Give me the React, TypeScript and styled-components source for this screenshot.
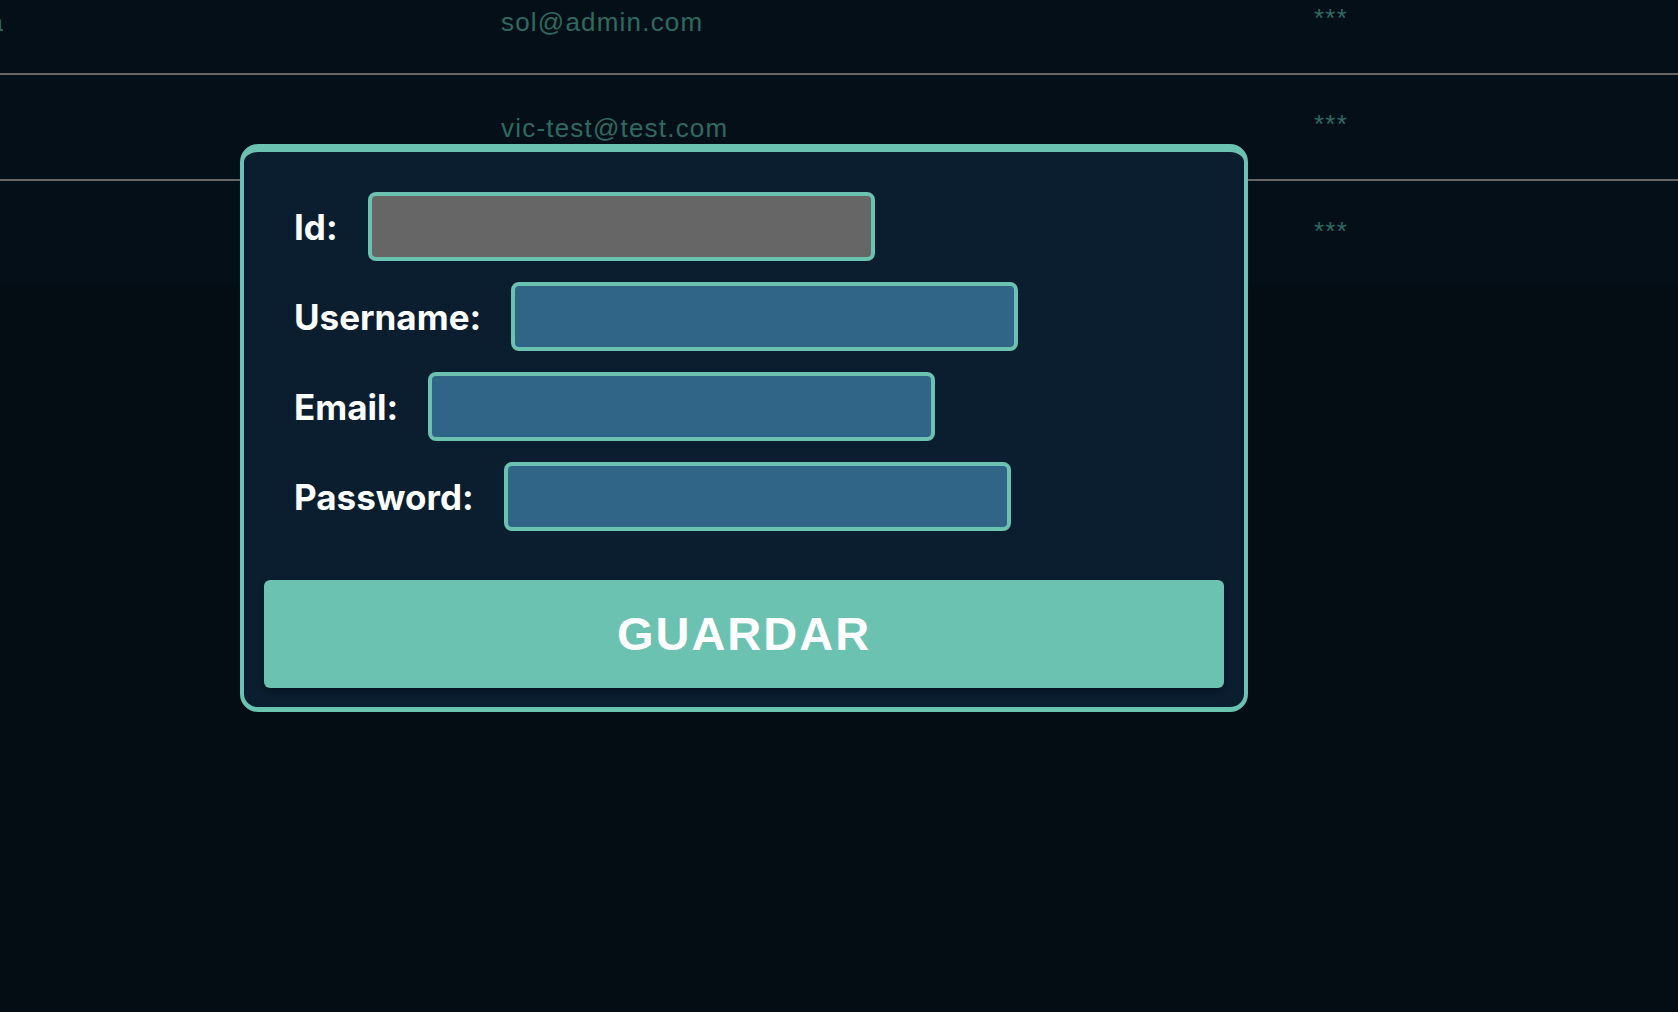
import styled, { createGlobalStyle } from 'styled-components'

const GlobalStyle = createGlobalStyle`
	html,
	body {
		margin: 0;
		padding: 0;
		background-color: #040c14;
	}

	body {
		min-height: 100vh;
		overflow: hidden;
	}
`

const Page = styled.div`
	position: relative;
	min-height: 100vh;
	overflow: hidden;
	background-color: #040c14;
`

const UsersTable = styled.div`
	margin-top: -31px;
	background-color: #050f18;
`

const TableRow = styled.div`
	display: grid;
	grid-template-columns: 501px 813px 1fr;
	align-items: center;
	height: 106px;
	padding-top: 2px;
	box-sizing: border-box;
	border-bottom: 2px solid #676767;

	&:last-child {
		border-bottom: none;
	}
`

const Cell = styled.div<{ $raise?: boolean }>`
	font-family: 'Liberation Sans', Arial, sans-serif;
	font-size: 26px;
	letter-spacing: 1.2px;
	color: #2e6a60;
	white-space: nowrap;
	padding-bottom: ${(p) => (p.$raise ? '7px' : '0')};
`

// username column is scrolled off to the left, only its tail shows
const ClippedCell = styled(Cell)`
	display: flex;
	justify-content: flex-end;
	width: 3px;
	letter-spacing: 0;
`

const ModalBox = styled.div`
	position: absolute;
	left: 240px;
	top: 144px;
	width: 1008px;
	box-sizing: border-box;
	border: 4px solid #6bc2b0;
	border-top-width: 8px;
	border-bottom-width: 5px;
	border-radius: 18px;
	background-color: #0a1e2f;
	padding: 40px 20px 19px 20px;
	z-index: 10;
`

const Form = styled.div`
	display: flex;
	flex-direction: column;
	gap: 21px;
	padding-left: 30px;
`

const FieldRow = styled.div`
	display: flex;
	align-items: center;
	gap: 30px;
`

const Label = styled.label`
	font-family: Inter, 'Noto Sans', sans-serif;
	font-size: 35px;
	font-weight: 700;
	color: #ffffff;
	white-space: nowrap;
`

const Input = styled.input<{ $disabled?: boolean }>`
	width: 507px;
	height: 69px;
	box-sizing: border-box;
	border: 4px solid #6bc2b0;
	border-radius: 8px;
	background-color: ${(p) => (p.$disabled ? '#666666' : '#316588')};
	outline: none;
	padding: 0 12px;
	font-size: 24px;
	color: #ffffff;
`

const SaveButton = styled.button`
	display: block;
	width: 100%;
	height: 108px;
	margin-top: 49px;
	border: none;
	border-radius: 6px;
	background-color: #6bc2b0;
	box-shadow: 0 3px 6px rgba(0, 0, 0, 0.35);
	color: #ffffff;
	font-family: 'Liberation Sans', Arial, sans-serif;
	font-size: 47px;
	font-weight: 700;
	letter-spacing: 2px;
	text-transform: uppercase;
	padding-bottom: 3px;
	cursor: pointer;
`

const users = [
	{ username: 'sola', email: 'sol@admin.com' },
	{ username: '', email: 'vic-test@test.com' },
	{ username: '', email: '' },
]

const fields = [
	{ label: 'Id:', disabled: true },
	{ label: 'Username:' },
	{ label: 'Email:' },
	{ label: 'Password:' },
]

export default function App() {
	return (
		<>
			<GlobalStyle />
			<Page>
				<UsersTable>
					{users.map((u, i) => (
						<TableRow key={i}>
							{u.username ? <ClippedCell>{u.username}</ClippedCell> : <Cell />}
							<Cell>{u.email}</Cell>
							<Cell $raise>***</Cell>
						</TableRow>
					))}
				</UsersTable>
				<ModalBox>
					<Form>
						{fields.map((f) => (
							<FieldRow key={f.label}>
								<Label>{f.label}</Label>
								<Input $disabled={f.disabled} disabled={f.disabled} />
							</FieldRow>
						))}
					</Form>
					<SaveButton>Guardar</SaveButton>
				</ModalBox>
			</Page>
		</>
	)
}
